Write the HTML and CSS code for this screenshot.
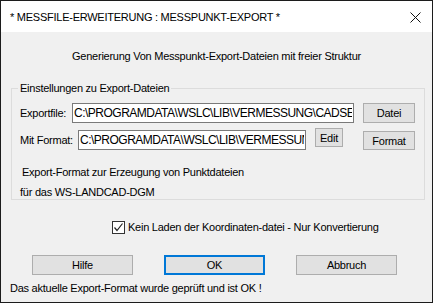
FILE: index.html
```html
<!DOCTYPE html>
<html lang="de">
<head>
    <meta charset="UTF-8">
    <title>Messpunkt-Export</title>
    <link rel="stylesheet" href="styles.css">
</head>
<body>
    <div class="window">
        <div class="titlebar">
            <span class="title">* MESSFILE-ERWEITERUNG : MESSPUNKT-EXPORT *</span>
            <svg class="close" width="11" height="11" viewBox="0 0 11 11">
                <path d="M0.5 0.5 L10.5 10.5 M10.5 0.5 L0.5 10.5" stroke="#111" stroke-width="1" fill="none"/>
            </svg>
        </div>
        <div class="subtitle">Generierung Von Messpunkt-Export-Dateien mit freier Struktur</div>
        <fieldset class="group">
            <legend>Einstellungen zu Export-Dateien</legend>
            <div class="row row-file">
                <label class="lbl lbl-file">Exportfile:</label>
                <input class="field field-file" type="text" value="C:\PROGRAMDATA\WSLC\LIB\VERMESSUNG\CADSEXPORT.FMT">
                <button class="btn btn-side">Datei</button>
            </div>
            <div class="row row-format">
                <label class="lbl lbl-format">Mit Format:</label>
                <input class="field field-format" type="text" value="C:\PROGRAMDATA\WSLC\LIB\VERMESSUNG\CADS.FMT">
                <button class="btn btn-edit">Edit</button>
                <button class="btn btn-side btn-format">Format</button>
            </div>
            <div class="info info-first">Export-Format zur Erzeugung von Punktdateien</div>
            <div class="info">für das WS-LANDCAD-DGM</div>
        </fieldset>
        <div class="check-row">
            <span class="checkbox">
                <svg width="11" height="11" viewBox="0 0 11 11">
                    <path d="M1.5 5.5 L4 8.5 L9.5 1.5" stroke="#222" stroke-width="1.2" fill="none"/>
                </svg>
            </span>
            <span>Kein Laden der Koordinaten-datei - Nur Konvertierung</span>
        </div>
        <div class="actions">
            <button class="btn btn-main">Hilfe</button>
            <button class="btn btn-main btn-default">OK</button>
            <button class="btn btn-main">Abbruch</button>
        </div>
        <div class="status">Das aktuelle Export-Format wurde geprüft und ist OK !</div>
    </div>
</body>
</html>
```

FILE: styles.css
```css
body {
    margin: 0;
    font-family: "Liberation Sans", Arial, sans-serif;
    font-size: 11px;
    letter-spacing: -0.25px;
    color: #000;
    background: #fff;
}
.window {
    width: 433px;
    height: 303px;
    box-sizing: border-box;
    border: 1px solid #1c1c1c;
    background: #f0f0f0;
    overflow: hidden;
}
.titlebar {
    height: 31px;
    background: #fff;
    display: flex;
    align-items: center;
    justify-content: space-between;
    padding: 0 11px 0 9px;
}
.title {
    font-size: 11px;
}
.close {
    display: block;
    margin-top: 1px;
}
.subtitle {
    text-align: center;
    line-height: 14px;
    margin-top: 17px;
}
.group {
    margin: 18px 7px 0 10px;
    padding: 0 0 0 6px;
    border: 1px solid #dcdcdc;
    min-width: 0;
}
.group legend {
    padding: 0 2px;
    line-height: 14px;
}
.row {
    display: flex;
    align-items: flex-start;
    margin-left: 2px;
}
.row-file {
    margin-top: 8px;
}
.row-format {
    margin-top: 7px;
}
.lbl {
    line-height: 20px;
    white-space: nowrap;
}
.lbl-file {
    width: 52px;
}
.lbl-format {
    width: 58px;
}
.field {
    height: 20px;
    box-sizing: border-box;
    border: 1px solid #7a7a7a;
    background: #fff;
    padding: 0 1px;
    margin: 0;
    font-family: "Liberation Sans", Arial, sans-serif;
    font-size: 12px;
    letter-spacing: -0.5px;
    color: #000;
    outline: none;
}
.field-file {
    width: 282px;
}
.field-format {
    width: 228px;
}
.btn {
    box-sizing: border-box;
    background: #e1e1e1;
    border: 1px solid #adadad;
    font-family: "Liberation Sans", Arial, sans-serif;
    font-size: 11px;
    letter-spacing: -0.25px;
    color: #000;
    padding: 0;
    margin: 0;
}
.btn-side {
    width: 52px;
    height: 20px;
    margin-left: 9px;
}
.btn-format {
    margin-left: 20px;
    margin-top: 1px;
    height: 19px;
}
.btn-edit {
    width: 28px;
    height: 19px;
    margin-left: 9px;
    margin-top: -2px;
}
.info {
    line-height: 14px;
    margin-top: 6px;
    margin-left: 2px;
}
.info-first {
    margin-top: 15px;
    margin-left: 4px;
}
.check-row {
    display: flex;
    align-items: center;
    margin: 20px 0 0 111px;
    line-height: 14px;
}
.checkbox {
    width: 13px;
    height: 13px;
    box-sizing: border-box;
    border: 1px solid #333;
    background: #fff;
    display: flex;
    align-items: center;
    justify-content: center;
    margin-right: 3px;
}
.checkbox svg {
    display: block;
}
.actions {
    display: flex;
    gap: 31px;
    margin: 21px 0 0 31px;
}
.btn-main {
    width: 101px;
    height: 20px;
}
.btn-default {
    border: 2px solid #0078d7;
}
.status {
    line-height: 14px;
    margin: 6px 0 0 9px;
}
```
